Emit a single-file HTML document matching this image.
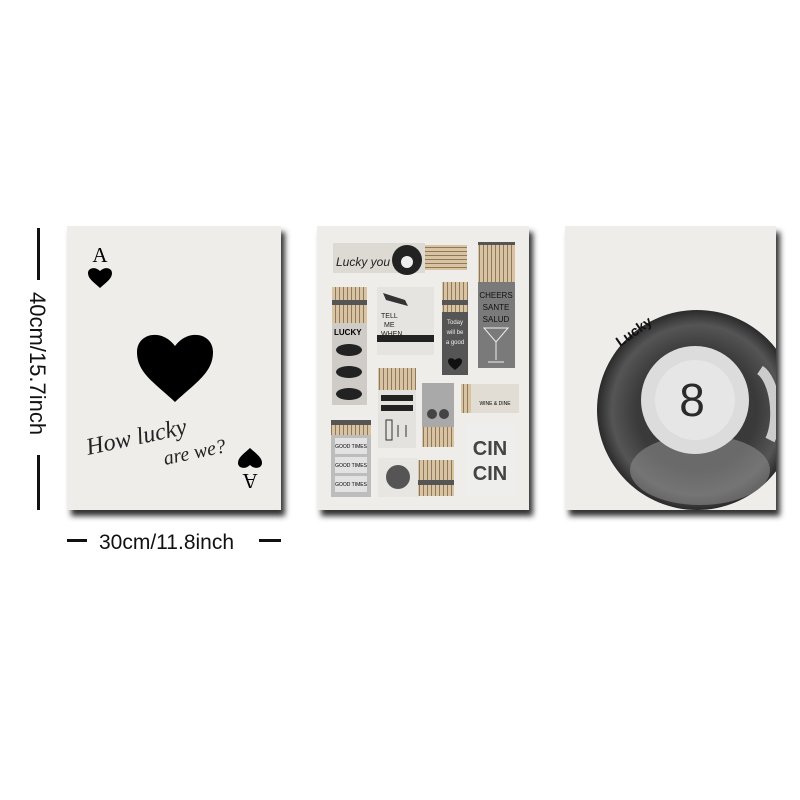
<!DOCTYPE html>
<html><head><meta charset="utf-8"><style>
html,body{margin:0;padding:0;background:#fff;width:800px;height:800px;overflow:hidden}
</style></head><body>
<svg width="800" height="800" viewBox="0 0 800 800" xmlns="http://www.w3.org/2000/svg" font-family="Liberation Sans, sans-serif">
<defs>
<filter id="sh" x="-10%" y="-10%" width="130%" height="130%"><feGaussianBlur stdDeviation="3"/></filter>
<pattern id="m" width="4" height="60" patternUnits="userSpaceOnUse"><rect width="4" height="60" fill="#d9c3a0"/><rect x="3" width="1" height="60" fill="#8a7a60"/><rect width="4" height="5" fill="#555"/></pattern>
<pattern id="mh" width="60" height="4" patternUnits="userSpaceOnUse"><rect width="60" height="4" fill="#d9c3a0"/><rect y="3" width="60" height="1" fill="#8a7a60"/><rect x="55" width="5" height="4" fill="#444"/></pattern>
<radialGradient id="bg8" cx="0.5" cy="0.5" r="0.5"><stop offset="0.6" stop-color="#3a3a3a"/><stop offset="0.85" stop-color="#555"/><stop offset="1" stop-color="#2a2a2a"/></radialGradient>
<clipPath id="c3"><rect x="565" y="226" width="211" height="284"/></clipPath>
</defs>
<rect x="71" y="232" width="214" height="284" fill="#333" filter="url(#sh)"/>
<rect x="321" y="232" width="212" height="284" fill="#333" filter="url(#sh)"/>
<rect x="569" y="232" width="211" height="284" fill="#333" filter="url(#sh)"/>
<!-- panel 1 -->
<rect x="67" y="226" width="214" height="284" fill="#efedea"/>
<text x="100" y="262" font-family="Liberation Serif, serif" font-size="21" text-anchor="middle">A</text>
<path d="M100 288 C92 281 88 278 88 273 C88 268 95 266 100 271 C105 266 112 268 112 273 C112 278 108 281 100 288Z"/>
<path d="M175 402 C155 383 137 373 137 352 C137 333 162 328 175 346 C188 328 213 333 213 352 C213 373 195 383 175 402Z"/>
<path d="M250 448 C242 455 238 458 238 463 C238 468 245 470 250 465 C255 470 262 468 262 463 C262 458 258 455 250 448Z"/>
<text x="0" y="0" font-family="Liberation Serif, serif" font-size="21" text-anchor="middle" transform="translate(250,474) rotate(180)">A</text>
<text x="88" y="455" font-family="Liberation Serif, serif" font-style="italic" font-size="24" fill="#222" transform="rotate(-12 88 455)">How lucky</text>
<text x="165" y="465" font-family="Liberation Serif, serif" font-style="italic" font-size="20" fill="#222" transform="rotate(-12 165 465)">are we?</text>
<!-- dims -->
<rect x="37" y="228" width="3" height="52" fill="#111"/>
<rect x="37" y="455" width="3" height="55" fill="#111"/>
<text x="0" y="0" font-size="22" fill="#111" transform="translate(30,292) rotate(90)">40cm/15.7inch</text>
<rect x="67" y="539" width="20" height="3" fill="#111"/>
<rect x="259" y="539" width="22" height="3" fill="#111"/>
<text x="99" y="549" font-size="21" fill="#111">30cm/11.8inch</text>
<!-- panel 2 -->
<rect x="317" y="226" width="212" height="284" fill="#efedea"/>
<rect x="333" y="243" width="92" height="30" fill="#ddd9d3"/>
<text x="336" y="266" font-size="12" fill="#222" font-style="italic">Lucky you</text>
<circle cx="407" cy="260" r="15" fill="#222"/><circle cx="407" cy="262" r="6" fill="#eee"/>
<rect x="425" y="245" width="42" height="25" fill="url(#mh)"/>
<rect x="478" y="242" width="37" height="40" fill="url(#m)"/>
<rect x="478" y="282" width="37" height="86" fill="#7a7a7a"/>
<text x="496" y="298" font-size="8" text-anchor="middle" fill="#111">CHEERS</text>
<text x="496" y="310" font-size="8" text-anchor="middle" fill="#111">SANTE</text>
<text x="496" y="322" font-size="8" text-anchor="middle" fill="#111">SALUD</text>
<path d="M484 328 L508 328 L496 342Z M496 342 V360 M488 362 H504" stroke="#eee" fill="none"/>
<rect x="332" y="287" width="35" height="36" fill="url(#m)"/>
<rect x="332" y="323" width="35" height="82" fill="#cfccc7"/>
<text x="334" y="335" font-size="8" font-weight="bold">LUCKY</text>
<ellipse cx="349" cy="350" rx="13" ry="6" fill="#222"/><ellipse cx="349" cy="372" rx="13" ry="6" fill="#222"/><ellipse cx="349" cy="394" rx="13" ry="6" fill="#222"/>
<rect x="377" y="287" width="57" height="68" fill="#e6e4e0"/>
<path d="M383 293 L405 300 L408 306 L386 300Z" fill="#333"/>
<text x="381" y="318" font-size="7" fill="#222">TELL</text><text x="384" y="327" font-size="7" fill="#222">ME</text><text x="381" y="336" font-size="7" fill="#222">WHEN</text>
<rect x="377" y="335" width="57" height="7" fill="#222"/>
<rect x="442" y="282" width="26" height="30" fill="url(#m)"/>
<rect x="442" y="312" width="26" height="63" fill="#555"/>
<text x="455" y="324" font-size="6" fill="#eee" text-anchor="middle">Today</text>
<text x="455" y="334" font-size="6" fill="#eee" text-anchor="middle">will be</text>
<text x="455" y="344" font-size="6" fill="#eee" text-anchor="middle">a good</text>
<path d="M455 370 C450 366 448 364 448 361 C448 358 452 357 455 360 C458 357 462 358 462 361 C462 364 460 366 455 370Z" fill="#111"/>
<rect x="378" y="368" width="38" height="22" fill="url(#m)"/>
<rect x="378" y="390" width="38" height="58" fill="#e4e2de"/>
<rect x="381" y="395" width="32" height="6" fill="#222"/><rect x="381" y="405" width="32" height="6" fill="#222"/>
<path d="M386 420 h6 v20 h-6z M398 425 v12 M406 425 v12" stroke="#333" fill="none"/>
<rect x="422" y="383" width="32" height="44" fill="#a9a9a9"/>
<circle cx="432" cy="414" r="5" fill="#444"/><circle cx="444" cy="414" r="5" fill="#444"/>
<rect x="422" y="427" width="32" height="20" fill="url(#m)"/>
<rect x="461" y="384" width="10" height="29" fill="url(#m)"/>
<rect x="471" y="384" width="48" height="29" fill="#e2ddd4"/>
<text x="495" y="405" font-size="5" text-anchor="middle">WINE &amp; DINE</text>
<rect x="331" y="420" width="40" height="15" fill="url(#m)"/>
<rect x="331" y="435" width="40" height="62" fill="#bdbdbd"/>
<rect x="335" y="438" width="32" height="16" fill="#e2e2e2"/><rect x="335" y="457" width="32" height="16" fill="#e2e2e2"/><rect x="335" y="476" width="32" height="16" fill="#e2e2e2"/>
<text x="351" y="448" font-size="5" text-anchor="middle">GOOD TIMES</text><text x="351" y="467" font-size="5" text-anchor="middle">GOOD TIMES</text><text x="351" y="486" font-size="5" text-anchor="middle">GOOD TIMES</text>
<rect x="378" y="458" width="40" height="39" fill="#e8e6e2"/>
<circle cx="398" cy="477" r="12" fill="#555"/>
<rect x="418" y="460" width="36" height="36" fill="url(#m)"/>
<rect x="466" y="423" width="49" height="73" fill="#eeeeec"/>
<text x="490" y="455" font-size="20" font-weight="bold" fill="#444" text-anchor="middle">CIN</text>
<text x="490" y="480" font-size="20" font-weight="bold" fill="#444" text-anchor="middle">CIN</text>
<!-- panel 3 -->
<rect x="565" y="226" width="211" height="284" fill="#efedea"/>
<g clip-path="url(#c3)">
<circle cx="697" cy="410" r="100" fill="url(#bg8)"/>
<ellipse cx="700" cy="470" rx="70" ry="35" fill="#8a8a8a" opacity="0.6"/>
<circle cx="695" cy="400" r="54" fill="#dcdcdc"/>
<circle cx="695" cy="400" r="40" fill="#e6e6e6"/>
<path d="M760 370 C775 380 780 420 770 440" stroke="#ccc" stroke-width="10" fill="none"/>
</g>
<text x="692" y="416" font-size="46" fill="#2a2a2a" text-anchor="middle">8</text>
<text x="0" y="0" font-size="14" font-weight="bold" fill="#111" transform="translate(620,347) rotate(-35)">Lucky</text>
</svg>
</body></html>
